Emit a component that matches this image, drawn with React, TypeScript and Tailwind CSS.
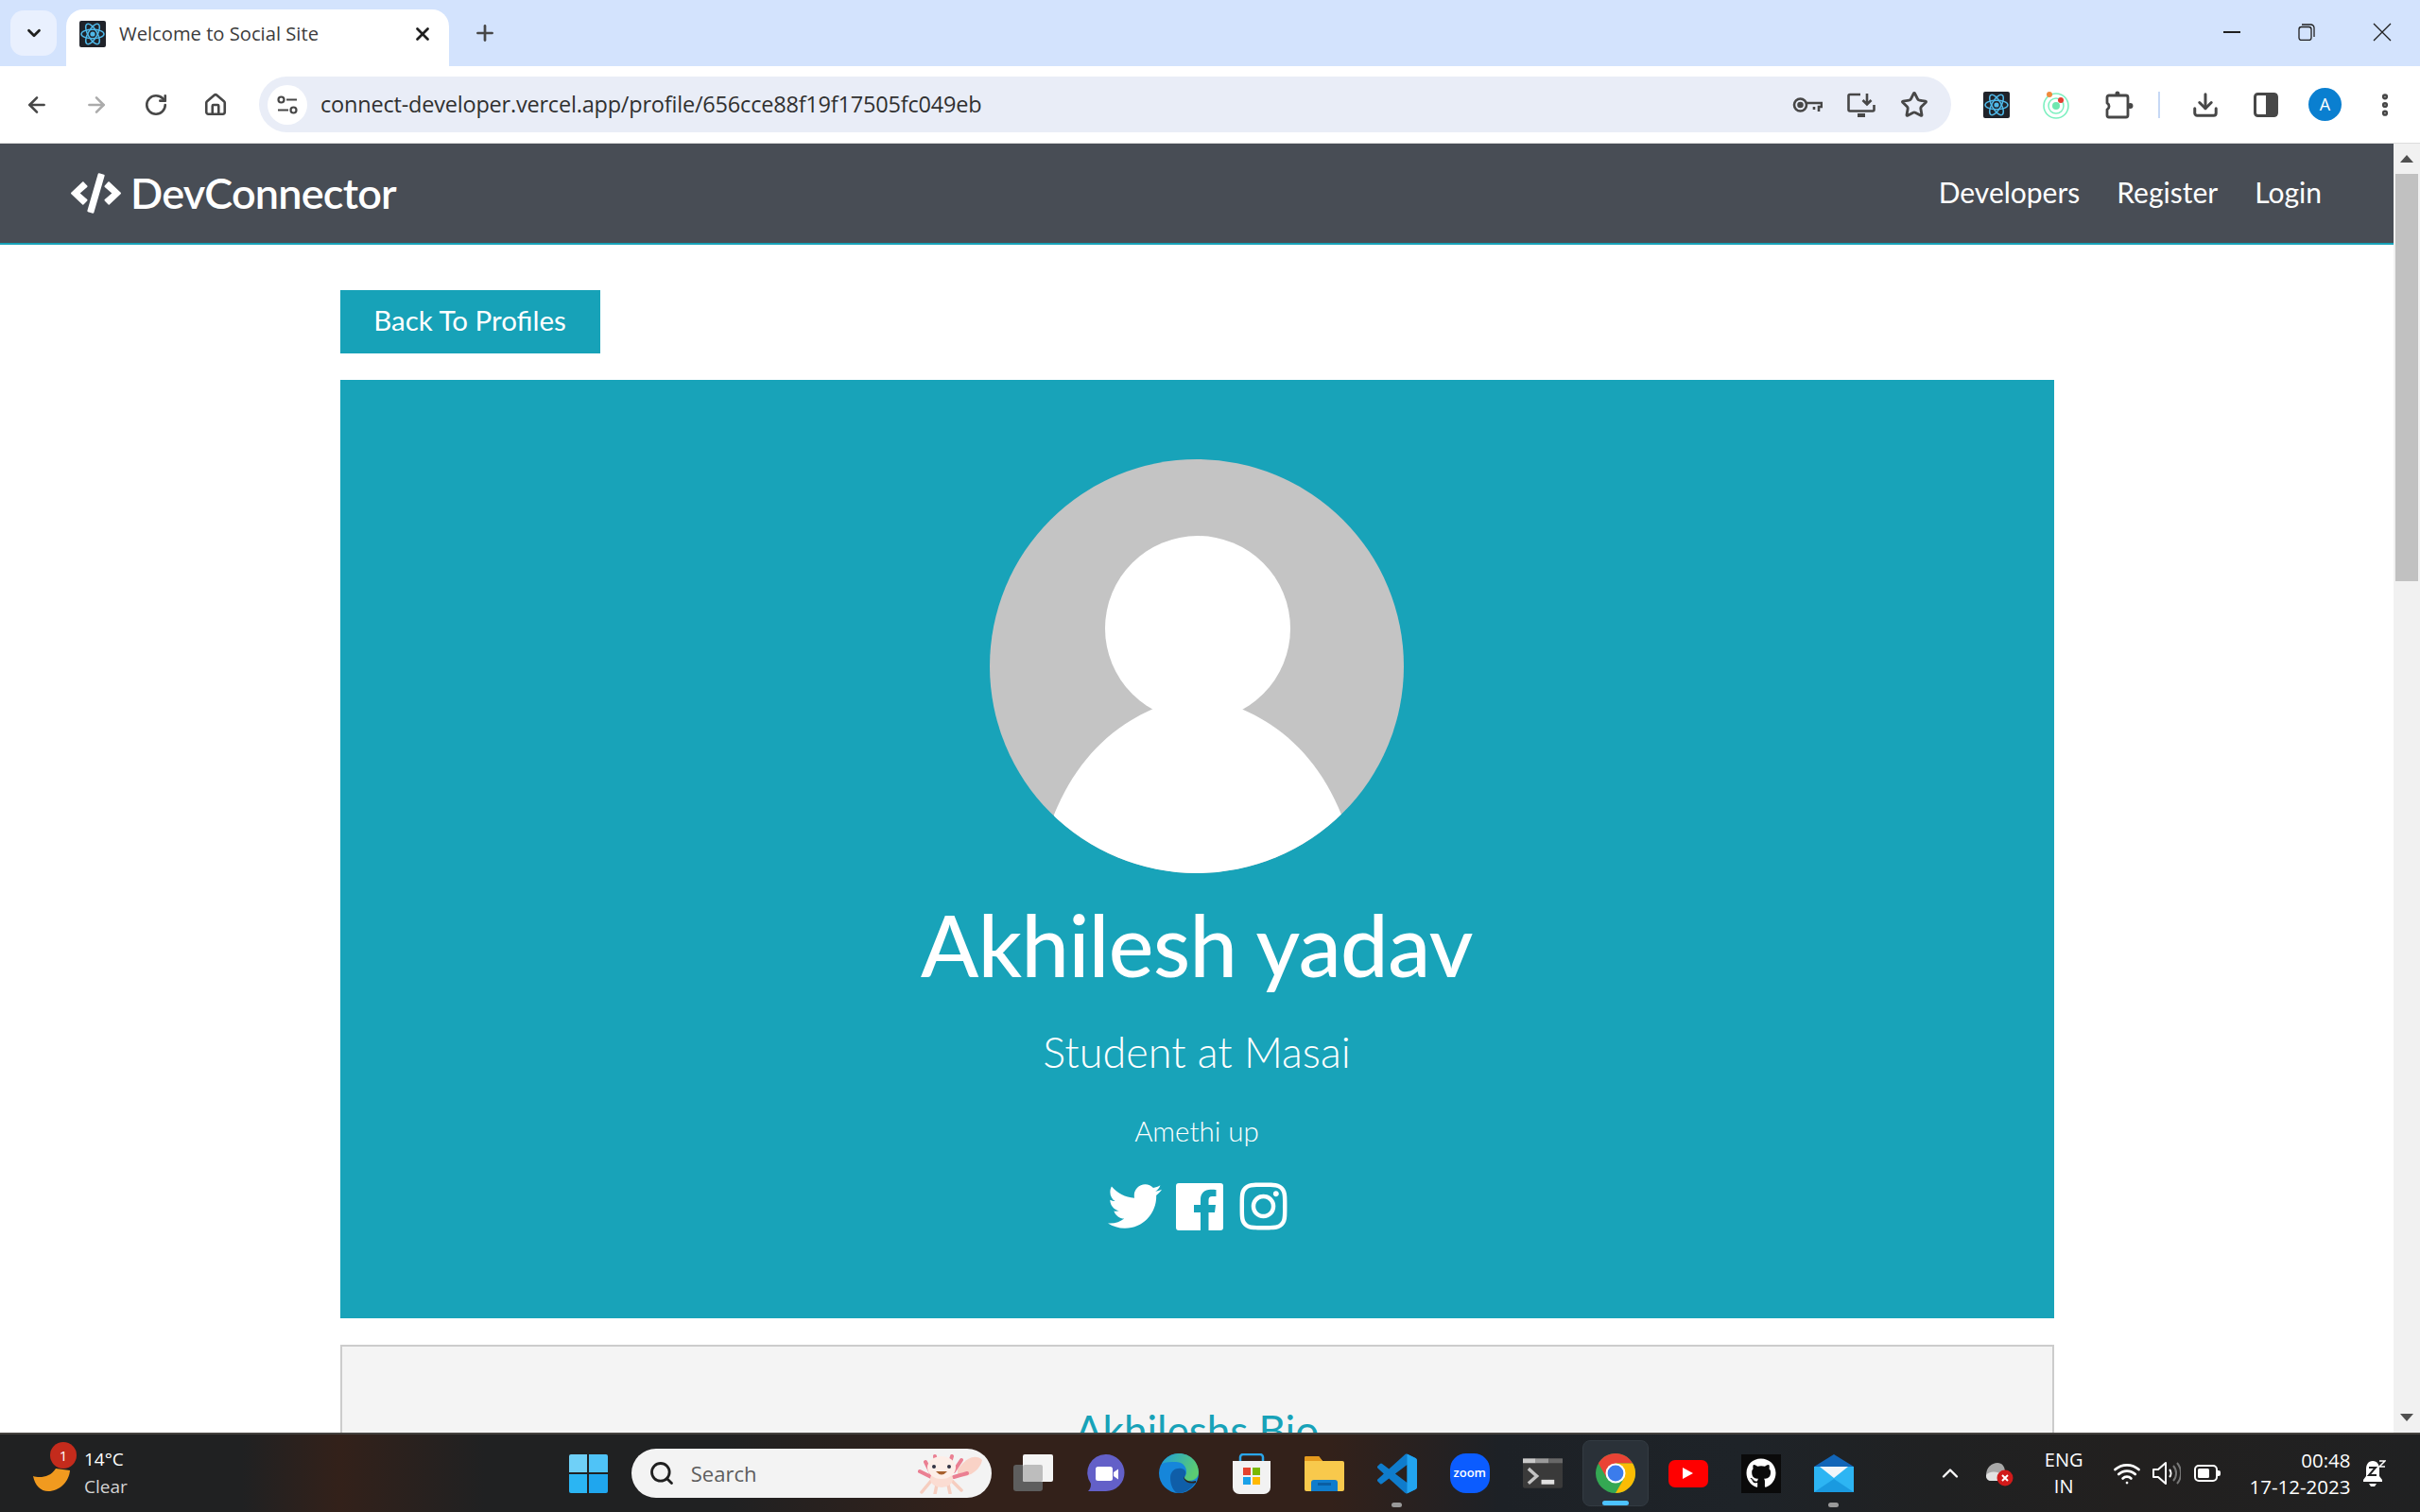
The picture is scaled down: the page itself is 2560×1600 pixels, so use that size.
import {
  ArrowLeft,
  ArrowRight,
  ChevronDown,
  ChevronUp,
  Download,
  Home,
  MoreVertical,
  Plus,
  RotateCw,
  Search,
  Star,
  Wifi,
  X,
} from 'lucide-react';
import type { ReactNode } from 'react';
import { FaCode, FaGithub, FaInstagram, FaTwitter } from 'react-icons/fa';

function ReactMark({ size }: { size: number }) {
  return (
    <svg width={size} height={size} viewBox="0 0 28 28">
      <rect width="28" height="28" rx="2" fill="#20232a" />
      <g fill="none" stroke="#4fb8e8" strokeWidth="1.500">
        <ellipse cx="14" cy="14" rx="12" ry="4.800" />
        <ellipse cx="14" cy="14" rx="12" ry="4.800" transform="rotate(60 14 14)" />
        <ellipse cx="14" cy="14" rx="12" ry="4.800" transform="rotate(120 14 14)" />
      </g>
      <circle cx="14" cy="14" r="2.600" fill="#4fb8e8" />
    </svg>
  );
}

function TabBar() {
  return (
    <div className="flex h-[70px] items-end bg-[#d3e3fd] pl-[11px] pr-[30px]">
      <div className="mb-[11px] flex h-[48px] w-[49px] items-center justify-center rounded-[14px] bg-[#e9f0fe]">
        <ChevronDown size={22} strokeWidth={3} className="text-[#1f1f1f]" />
      </div>
      <div className="ml-[10px] flex h-[60px] w-[405px] items-center rounded-t-[18px] bg-white pb-[9px] pl-[14px] pr-[17px]">
        <ReactMark size={28} />
        <span className="ml-[14px] flex-1 text-[20.2px] text-[#3c3c3c]">Welcome to Social Site</span>
        <X size={22} strokeWidth={3} className="text-[#1f1f1f]" />
      </div>
      <Plus size={26} strokeWidth={2.5} className="mb-[22px] ml-[25px] text-[#474747]" />
      <div className="mb-[26px] ml-auto flex items-center gap-[61px]">
        <div className="h-[2px] w-[18px] bg-[#1f1f1f]" />
        <svg width="18" height="18" viewBox="0 0 18 18" fill="none" stroke="#1f1f1f" strokeWidth="1.300">
          <rect x="1" y="3.500" width="13" height="14" rx="2.500" />
          <path d="M4 1h9.500A3.500 3.500 0 0 1 17 4.500V14" />
        </svg>
        <svg width="20" height="20" viewBox="0 0 20 20" stroke="#1f1f1f" strokeWidth="1.300">
          <path d="M1 1l18 18M19 1L1 19" />
        </svg>
      </div>
    </div>
  );
}

function OrbitMark() {
  return (
    <svg width="28" height="30" viewBox="0 0 28 30">
      <circle cx="14" cy="16" r="13" fill="none" stroke="#7df0c0" strokeWidth="1.600" />
      <circle cx="14" cy="16" r="8" fill="none" stroke="#7df0c0" strokeWidth="1.500" />
      <circle cx="14" cy="16" r="4" fill="#6fe8b0" />
      <circle cx="7" cy="4" r="3" fill="#f08a3c" />
      <circle cx="19" cy="10" r="3" fill="#e43d30" />
    </svg>
  );
}

function Toolbar() {
  return (
    <div className="flex h-[82px] items-center border-b border-[#dcdcdc] bg-white pl-[26px] pr-[22px]">
      <div className="flex items-center gap-[37px] text-[#474747]">
        <ArrowLeft size={26} strokeWidth={2.4} />
        <ArrowRight size={26} strokeWidth={2.4} className="text-[#ababab]" />
        <RotateCw size={26} strokeWidth={2.4} />
        <Home size={26} strokeWidth={2.4} />
      </div>
      <div className="ml-[33px] flex h-[59px] w-[1792px] items-center rounded-full bg-[#e9edf7] pl-[9px] pr-[24px]">
        <div className="flex h-[42px] w-[42px] items-center justify-center rounded-full bg-white">
          <svg width="22" height="20" viewBox="0 0 22 20" fill="none" stroke="#474747" strokeWidth="2.200">
            <circle cx="4.500" cy="4.500" r="3" />
            <path d="M10 4.500h11M1 15.500h11" />
            <circle cx="17.500" cy="15.500" r="3" />
          </svg>
        </div>
        <span className="ml-[14px] flex-1 text-[23.5px] tracking-[-0.2px] text-[#303030]">
          connect-developer.vercel.app/profile/656cce88f19f17505fc049eb
        </span>
        <div className="flex items-center gap-[26px] text-[#474747]">
          <svg width="32" height="18" viewBox="0 0 32 18" fill="none" stroke="#474747" strokeWidth="2.600">
            <circle cx="8.500" cy="9" r="6.500" />
            <circle cx="8.500" cy="9" r="2" fill="#474747" />
            <path d="M15 7h16v4h-3v5M23 11v3" />
          </svg>
          <svg width="30" height="26" viewBox="0 0 30 26" fill="none" stroke="#474747" strokeWidth="2.600">
            <path d="M14 2H3a1.500 1.500 0 0 0-1.500 1.500V18A1.500 1.500 0 0 0 3 19.500h24a1.500 1.500 0 0 0 1.500-1.500v-5" />
            <path d="M21 1v11M16.500 8l4.500 4.500L25.500 8" />
            <path d="M11 24h8" strokeWidth="4" />
          </svg>
          <Star size={30} strokeWidth={2.3} />
        </div>
      </div>
      <div className="ml-[34px]">
        <ReactMark size={28} />
      </div>
      <div className="ml-[35px] flex w-[28px] justify-center">
        <OrbitMark />
      </div>
      <svg width="30" height="30" viewBox="0 0 30 30" fill="none" stroke="#474747" strokeWidth="2.800" className="ml-[38px]">
        <path d="M2 7a2 2 0 0 1 2-2h18a2 2 0 0 1 2 2v19a2 2 0 0 1-2 2H4a2 2 0 0 1-2-2v-6a4 4 0 0 0 0-7Z" strokeLinejoin="round" />
        <circle cx="13" cy="3" r="2.500" fill="#474747" stroke="none" />
        <circle cx="26.500" cy="16" r="3" fill="#474747" stroke="none" />
      </svg>
      <div className="ml-[26px] h-[28px] w-[2px] bg-[#c7d9f5]" />
      <Download size={30} strokeWidth={2.4} className="ml-[33px] text-[#474747]" />
      <svg width="26" height="26" viewBox="0 0 26 26" className="ml-[36px]">
        <rect x="1.500" y="1.500" width="23" height="23" rx="3" fill="#fff" stroke="#474747" strokeWidth="3" />
        <rect x="13" y="1.500" width="12" height="23" fill="#474747" />
      </svg>
      <div className="ml-[32px] flex h-[35px] w-[35px] items-center justify-center rounded-full bg-[#0a7fd0] text-[18px] text-white">
        A
      </div>
      <MoreVertical size={30} strokeWidth={3} className="ml-[31px] text-[#474747]" />
    </div>
  );
}

function Avatar() {
  return (
    <svg width="438" height="438" viewBox="0 0 438 438">
      <defs>
        <clipPath id="avatar-clip">
          <circle cx="219" cy="219" r="219" />
        </clipPath>
      </defs>
      <g clipPath="url(#avatar-clip)">
        <rect width="438" height="438" fill="#c4c4c4" />
        <circle cx="220" cy="179" r="98" fill="#fff" />
        <path d="M68 376C90 322 125 285 173 264L266 264C315 285 350 322 372 376L372 438L68 438Z" fill="#fff" />
      </g>
    </svg>
  );
}

function FacebookMark() {
  return (
    <svg width="50" height="50" viewBox="0 0 50 50" fill="#fff" className="ml-[1px]">
      <path d="M3 0H47a3 3 0 0 1 3 3V47a3 3 0 0 1-3 3H34.500V31h6.500l1-8h-7.500v-5c0-2.300 1-3.900 4-3.900h4V7c-1-.1-3-.3-6-.3-6 0-10.500 3.800-10.500 10.300v6h-7v8h7v19H3a3 3 0 0 1-3-3V3a3 3 0 0 1 3-3Z" />
    </svg>
  );
}

function Navbar() {
  return (
    <nav className="flex h-[107px] items-center justify-between border-b-2 border-[#17a2b8] bg-[#484d55] pl-[75px] pr-[76px] text-white">
      <div className="flex items-center">
        <FaCode size={53} />
        <span className="ml-[10px] text-[45px] font-semibold tracking-[-0.8px]">DevConnector</span>
      </div>
      <div className="flex items-center gap-[39px] pb-[2px] text-[30px]">
        <span>Developers</span>
        <span>Register</span>
        <span>Login</span>
      </div>
    </nav>
  );
}

function ProfilePage() {
  return (
    <div className="mx-auto w-[1813px] pt-[48px]">
      <div className="flex h-[67px] w-[275px] items-center justify-center bg-[#17a2b8] pb-[3px] text-[29.5px] text-white">
        Back To Profiles
      </div>
      <div className="mt-[28px] flex h-[993px] flex-col items-center bg-[#18a3b9] pt-[84px] text-white">
        <Avatar />
        <h1 className="mt-[21px] text-[90px] leading-[108px] font-medium tracking-[-0.5px]">Akhilesh yadav</h1>
        <p className="mt-[32px] text-[45px] leading-[56px] font-light">Student at Masai</p>
        <p className="mt-[36px] text-[29.5px] leading-[40px] font-light">Amethi up</p>
        <div className="mt-[31px] flex items-center gap-[14px] pl-[5px]">
          <FaTwitter size={57} />
          <FacebookMark />
          <FaInstagram size={57} />
        </div>
      </div>
      <div className="mt-[28px] h-[300px] border-2 border-[#cccccc] bg-[#f4f4f4] pt-[60px] text-center text-[44px] leading-[56px] text-[#17a2b8]">
        Akhileshs Bio
      </div>
    </div>
  );
}

function Scrollbar() {
  return (
    <div className="flex w-[28px] flex-col items-center bg-[#f1f1f1]">
      <div className="mt-[12px] h-0 w-0 border-x-[7px] border-b-[8px] border-x-transparent border-b-[#505050]" />
      <div className="mt-[12px] h-[431px] w-[24px] bg-[#c1c1c1]" />
      <div className="mt-auto mb-[12px] h-0 w-0 border-x-[7px] border-t-[8px] border-x-transparent border-t-[#505050]" />
    </div>
  );
}

function Axolotl() {
  return (
    <svg width="80" height="44" viewBox="0 0 80 44">
      <path d="M52 18C62 4 72 2 78 8C76 18 66 26 52 26Z" fill="#f9d2c6" />
      <path d="M18 10L24 22M28 4L30 18M46 4L42 18M56 8L48 20M12 20L24 26M62 22L48 26" stroke="#ea7f92" strokeWidth="4" strokeLinecap="round" />
      <path d="M24 30L14 42M46 30L56 40M30 34L28 44M42 34L44 43" stroke="#f6cdbf" strokeWidth="3.500" strokeLinecap="round" />
      <ellipse cx="35" cy="28" rx="12" ry="9" fill="#fbdcd2" />
      <ellipse cx="35" cy="16" rx="15" ry="12" fill="#fdeee8" />
      <circle cx="27" cy="15" r="2" fill="#334" />
      <circle cx="43" cy="15" r="2" fill="#334" />
      <path d="M29 20Q35 27 41 20Z" fill="#a8602d" />
    </svg>
  );
}

function TaskbarSlot({ children, dot }: { children: ReactNode; dot?: boolean }) {
  return (
    <div className="relative flex h-[42px] w-[42px] items-center justify-center">
      {children}
      {dot && <div className="absolute -bottom-[15px] h-[5px] w-[11px] rounded-full bg-[#9a9a9a]" />}
    </div>
  );
}

function ChromeLogo() {
  return (
    <svg width="42" height="42" viewBox="2 2 44 44">
      <circle cx="24" cy="24" r="22" fill="#34a853" />
      <path d="M24 13H43.050A22 22 0 0 0 4.950 13L14.470 29.500Z" fill="#ea4335" />
      <path d="M24 13H43.050A22 22 0 0 1 24 46L33.530 29.500Z" fill="#fbbc04" />
      <circle cx="24" cy="24" r="11" fill="#fff" />
      <circle cx="24" cy="24" r="8.800" fill="#3b7cec" />
    </svg>
  );
}

function TaskbarIcons() {
  return (
    <div className="flex items-center gap-[35px]">
      <TaskbarSlot>
        <svg width="42" height="40" viewBox="0 0 42 40">
          <rect x="0" y="11" width="31" height="28" rx="3" fill="#5e5e5e" />
          <rect x="10" y="0" width="32" height="29" rx="2" fill="#f4f4f4" />
          <rect x="10" y="11" width="21" height="18" rx="2" fill="#bdbdbd" />
        </svg>
      </TaskbarSlot>
      <TaskbarSlot>
        <svg width="40" height="40" viewBox="0 0 40 40">
          <path d="M20 0A19.500 19.500 0 0 1 20 39H1C3 37 4 35 4 31A19.500 19.500 0 0 1 20 0Z" fill="#6360c8" />
          <rect x="9" y="13" width="18" height="15" rx="2.500" fill="#fff" />
          <path d="M28 19l5-3.500v11L28 23Z" fill="#fff" />
        </svg>
      </TaskbarSlot>
      <TaskbarSlot>
        <svg width="42" height="42" viewBox="0 0 42 42">
          <defs>
            <linearGradient id="edge-top" x1="0" y1="0" x2="1" y2="0.400">
              <stop offset="0" stopColor="#1f9fd8" />
              <stop offset="1" stopColor="#5bcb72" />
            </linearGradient>
          </defs>
          <circle cx="21" cy="21" r="21" fill="#1686da" />
          <path d="M3 11C7 4 14 0 21 0C33 0 42 9 42 20C42 26 37 29 31 29C27 29 25 27 26 26C28 24 29 22 29 19C29 13 24 9 18 9C12 9 7 9 3 11Z" fill="url(#edge-top)" />
          <path d="M12 26C12 18 18 15 24 16C28 17 29 20 28 23C26 26 27 29 31 31C34 32 37 31 39 30C34 38 27 42 21 42C16 42 12 34 12 26Z" fill="#0f5ea8" />
          <path d="M26 24C27 28 32 31 39 29L39 31C32 33 26 30 26 24Z" fill="#2c2018" />
        </svg>
      </TaskbarSlot>
      <TaskbarSlot>
        <svg width="40" height="43" viewBox="0 0 40 43">
          <path d="M8 10V4a3 3 0 0 1 3-3h18a3 3 0 0 1 3 3v6" fill="none" stroke="#2aa6ea" strokeWidth="2.500" />
          <path d="M0 8h40v28a7 7 0 0 1-7 7H7a7 7 0 0 1-7-7Z" fill="#f2f2f2" />
          <rect x="11" y="15" width="8" height="8" fill="#e5432e" />
          <rect x="21" y="15" width="8" height="8" fill="#7ab800" />
          <rect x="11" y="25" width="8" height="8" fill="#1aa1e8" />
          <rect x="21" y="25" width="8" height="8" fill="#ffb900" />
        </svg>
      </TaskbarSlot>
      <TaskbarSlot>
        <svg width="42" height="37" viewBox="0 0 42 37">
          <path d="M0 2a2 2 0 0 1 2-2h13l4 5h21a2 2 0 0 1 2 2v28a2 2 0 0 1-2 2H2a2 2 0 0 1-2-2Z" fill="#f8c94c" />
          <path d="M0 2a2 2 0 0 1 2-2h13l4 5H0Z" fill="#e59a1d" />
          <path d="M7 28a3 3 0 0 1 3-3h22a3 3 0 0 1 3 3v9H7Z" fill="#0f7ccc" />
          <rect x="14" y="28" width="14" height="3" fill="#0a5ea3" />
        </svg>
      </TaskbarSlot>
      <TaskbarSlot dot>
        <svg width="43" height="43" viewBox="0 0 24 24">
          <path d="M23.150 2.587L18.210.21a1.494 1.494 0 0 0-1.705.29l-9.460 8.630-4.120-3.128a.999.999 0 0 0-1.276.057L.327 7.261A1 1 0 0 0 .326 8.740L3.899 12 .326 15.260a1 1 0 0 0 .001 1.479L1.650 17.940a.999.999 0 0 0 1.276.057l4.120-3.128 9.460 8.630a1.492 1.492 0 0 0 1.704.29l4.942-2.377A1.500 1.500 0 0 0 24 20.060V3.939a1.500 1.500 0 0 0-.85-1.352zm-5.146 14.861L10.826 12l7.178-5.448v10.896z" fill="#0f7ccc" />
          <path d="M18 .06a1.500 1.500 0 0 1 .21.15l4.940 2.377A1.500 1.500 0 0 1 24 3.939V20.060a1.500 1.500 0 0 1-.85 1.353l-4.942 2.377a1.500 1.500 0 0 1-.204.08V6.552Z" fill="#22a4f0" />
        </svg>
      </TaskbarSlot>
      <TaskbarSlot>
        <div className="flex h-[42px] w-[42px] items-center justify-center rounded-[40%] bg-[#0b5cff] text-[13px] font-semibold text-white">
          zoom
        </div>
      </TaskbarSlot>
      <TaskbarSlot>
        <svg width="43" height="32" viewBox="0 0 43 32">
          <rect width="43" height="32" rx="2" fill="#3a3a3a" />
          <rect width="14" height="5" fill="#c9c9c9" />
          <rect x="14" width="14" height="5" fill="#9a9a9a" />
          <rect x="28" width="15" height="5" fill="#686868" />
          <path d="M6 11l9 8-9 8" fill="none" stroke="#c4c4c4" strokeWidth="3.500" />
          <rect x="20" y="23" width="14" height="5" fill="#e0e0e0" />
        </svg>
      </TaskbarSlot>
      <div className="relative flex h-[42px] w-[42px] items-center justify-center">
        <div className="absolute -top-[14px] -left-[14px] h-[70px] w-[70px] rounded-[8px] border border-[#333b42] bg-[#2a3138]" />
        <div className="absolute -bottom-[13px] h-[5px] w-[28px] rounded-full bg-[#4cc2ff]" />
        <div className="relative">
          <ChromeLogo />
        </div>
      </div>
      <TaskbarSlot>
        <div className="flex h-[29px] w-[42px] items-center justify-center rounded-[7px] bg-[#ff0000]">
          <div className="h-0 w-0 border-y-[6px] border-l-[11px] border-y-transparent border-l-white" />
        </div>
      </TaskbarSlot>
      <TaskbarSlot>
        <div className="flex h-[41px] w-[42px] items-center justify-center bg-[#0a0a0a] text-white">
          <FaGithub size={32} />
        </div>
      </TaskbarSlot>
      <TaskbarSlot dot>
        <svg width="42" height="40" viewBox="0 0 42 40">
          <path d="M21 0L42 13V20H0V13Z" fill="#1165b8" />
          <path d="M0 13H42V40H0Z" fill="#2db5f3" />
          <path d="M0 40L21 26L42 40Z" fill="#1a9ae0" />
          <path d="M6 13H36L21 25Z" fill="#f2f6fa" />
        </svg>
      </TaskbarSlot>
    </div>
  );
}

function Taskbar() {
  return (
    <div className="flex h-[84px] items-center border-t-2 border-[#45423f] bg-[linear-gradient(90deg,#202122_0%,#202122_10%,#33211a_14%,#202122_20%,#202122_30%,#33211a_40%,#33211a_55%,#1d2126_62%,#1e2328_72%,#202122_80%,#22201f_88%,#202122_100%)] font-['Open_Sans',sans-serif] text-white">
      <div className="relative ml-[35px] flex w-[54px] items-end self-stretch pb-[22px]">
        <svg width="40" height="24" viewBox="0 0 40 24">
          <path d="M0 8C6 10 18 10 24 0L39 2C38 14 28 24 16 24C8 24 2 18 0 8Z" fill="#f19a1f" />
        </svg>
        <div className="absolute top-[8px] left-[18px] flex h-[28px] w-[28px] items-center justify-center rounded-full bg-[#c42b1c] text-[15px]">
          1
        </div>
      </div>
      <div className="flex flex-col text-[19px] leading-[29px]">
        <span>14°C</span>
        <span className="text-[#d4d4d4]">Clear</span>
      </div>
      <div className="ml-[467px] grid h-[41px] w-[41px] grid-cols-2 gap-[2px]">
        <div className="rounded-tl-[2px] bg-[#6fd0f7]" />
        <div className="rounded-tr-[2px] bg-[#4fc3f7]" />
        <div className="rounded-bl-[2px] bg-[#2bb5f3]" />
        <div className="rounded-br-[2px] bg-[#1fa6ee]" />
      </div>
      <div className="ml-[25px] flex h-[52px] w-[381px] items-center rounded-full bg-[#f3f3f3] pl-[18px] pr-[8px]">
        <Search size={28} strokeWidth={2.4} className="text-[#1f1f1f]" />
        <span className="ml-[17px] flex-1 text-[22px] text-[#5d5d5d]">Search</span>
        <Axolotl />
      </div>
      <div className="ml-[23px]">
        <TaskbarIcons />
      </div>
      <div className="ml-[88px] flex items-center">
        <ChevronUp size={28} strokeWidth={2} />
        <svg width="30" height="30" viewBox="0 0 30 30" className="ml-[23px]">
          <path d="M1 17C1 9 7 4 13 4C18 4 21 8 21 14V23H7C3 23 1 21 1 17Z" fill="#a8a8a8" />
          <path d="M1 17C6 12 12 13 21 17V23H7C3 23 1 21 1 17Z" fill="#e2e2e2" />
          <circle cx="21" cy="20" r="8.500" fill="#d11a1a" />
          <path d="M18 17l6 6M24 17l-6 6" stroke="#fff" strokeWidth="2" />
        </svg>
        <div className="ml-[33px] flex flex-col items-center text-[20px] leading-[28px]">
          <span>ENG</span>
          <span>IN</span>
        </div>
        <Wifi size={30} strokeWidth={2.2} className="ml-[32px]" />
        <svg width="30" height="26" viewBox="0 0 30 26" fill="none" stroke="#fff" strokeWidth="2" className="ml-[12px]">
          <path d="M1 9v8h5l8 7V2L6 9Z" strokeLinejoin="round" />
          <path d="M18 9a6 6 0 0 1 0 8" />
          <path d="M22 5a12 12 0 0 1 0 16M26 2a17 17 0 0 1 0 22" stroke="#777" />
        </svg>
        <svg width="28" height="18" viewBox="0 0 28 18" className="ml-[14px]">
          <rect x="1" y="1" width="23" height="16" rx="4" fill="none" stroke="#fff" strokeWidth="2" />
          <rect x="4" y="4" width="12" height="10" rx="1.500" fill="#fff" />
          <path d="M25 6h1a2 2 0 0 1 2 2v2a2 2 0 0 1-2 2h-1Z" fill="#fff" />
        </svg>
        <div className="ml-[16px] flex w-[121px] flex-col items-end text-[20.5px] leading-[28px]">
          <span>00:48</span>
          <span>17-12-2023</span>
        </div>
        <svg width="24" height="28" viewBox="0 0 24 28" className="ml-[14px]">
          <path d="M10 1C5 1 3 5 3 10V17L0 21V23H20V21L17 17V10C17 5 15 1 10 1Z" fill="#fff" />
          <path d="M6 25h8l-2 3H8Z" fill="#fff" />
          <path d="M6 8h7l-7 8h8" fill="none" stroke="#202122" strokeWidth="2" />
          <path d="M17 1h6l-6 6h6" fill="none" stroke="#fff" strokeWidth="1.500" />
        </svg>
      </div>
    </div>
  );
}

export default function App() {
  return (
    <div className="flex h-[1600px] w-[2560px] flex-col overflow-hidden bg-white font-['Lato',sans-serif]">
      <div className="font-['Open_Sans',sans-serif]">
        <TabBar />
        <Toolbar />
      </div>
      <div className="flex min-h-0 flex-1">
        <div className="min-w-0 flex-1 overflow-hidden">
          <Navbar />
          <ProfilePage />
        </div>
        <Scrollbar />
      </div>
      <Taskbar />
    </div>
  );
}
